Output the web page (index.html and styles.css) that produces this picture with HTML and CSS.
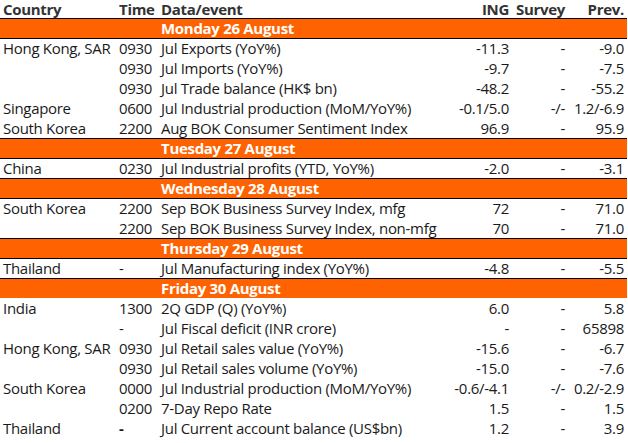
FILE: index.html
```html
<!DOCTYPE html>
<html lang="en">
<head>
<meta charset="utf-8">
<title>Asia calendar</title>
<link rel="stylesheet" href="styles.css">
</head>
<body>
<div class="cal">
  <div class="row head">
    <div class="c1">Country</div><div>Time</div><div>Data/event</div><div class="num">ING</div><div class="num">Survey</div><div class="num">Prev.</div>
  </div>

  <div class="row band"><div></div><div></div><div>Monday 26 August</div></div>
  <div class="group">
    <div class="row"><div class="c1">Hong Kong, SAR</div><div>0930</div><div>Jul Exports (YoY%)</div><div class="num">-11.3</div><div class="num">-</div><div class="num">-9.0</div></div>
    <div class="row"><div class="c1"></div><div>0930</div><div>Jul Imports (YoY%)</div><div class="num">-9.7</div><div class="num">-</div><div class="num">-7.5</div></div>
    <div class="row"><div class="c1"></div><div>0930</div><div>Jul Trade balance (HK$ bn)</div><div class="num">-48.2</div><div class="num">-</div><div class="num">-55.2</div></div>
    <div class="row"><div class="c1">Singapore</div><div>0600</div><div>Jul Industrial production (MoM/YoY%)</div><div class="num">-0.1/5.0</div><div class="num">-/-</div><div class="num">1.2/-6.9</div></div>
    <div class="row"><div class="c1">South Korea</div><div>2200</div><div>Aug BOK Consumer Sentiment Index</div><div class="num">96.9</div><div class="num">-</div><div class="num">95.9</div></div>
  </div>

  <div class="row band"><div></div><div></div><div>Tuesday 27 August</div></div>
  <div class="group">
    <div class="row"><div class="c1">China</div><div>0230</div><div>Jul Industrial profits (YTD, YoY%)</div><div class="num">-2.0</div><div class="num">-</div><div class="num">-3.1</div></div>
  </div>

  <div class="row band"><div></div><div></div><div>Wednesday 28 August</div></div>
  <div class="group">
    <div class="row"><div class="c1">South Korea</div><div>2200</div><div>Sep BOK Business Survey Index, mfg</div><div class="num">72</div><div class="num">-</div><div class="num">71.0</div></div>
    <div class="row"><div class="c1"></div><div>2200</div><div>Sep BOK Business Survey Index, non-mfg</div><div class="num">70</div><div class="num">-</div><div class="num">71.0</div></div>
  </div>

  <div class="row band"><div></div><div></div><div>Thursday 29 August</div></div>
  <div class="group">
    <div class="row"><div class="c1">Thailand</div><div>-</div><div>Jul Manufacturing index (YoY%)</div><div class="num">-4.8</div><div class="num">-</div><div class="num">-5.5</div></div>
  </div>

  <div class="row band"><div></div><div></div><div>Friday 30 August</div></div>
  <div class="group open">
    <div class="row"><div class="c1">India</div><div>1300</div><div>2Q GDP (Q) (YoY%)</div><div class="num">6.0</div><div class="num">-</div><div class="num">5.8</div></div>
    <div class="row"><div class="c1"></div><div>-</div><div>Jul Fiscal deficit (INR crore)</div><div class="num">-</div><div class="num">-</div><div class="num">65898</div></div>
    <div class="row"><div class="c1">Hong Kong, SAR</div><div>0930</div><div>Jul Retail sales value (YoY%)</div><div class="num">-15.6</div><div class="num">-</div><div class="num">-6.7</div></div>
    <div class="row"><div class="c1"></div><div>0930</div><div>Jul Retail sales volume (YoY%)</div><div class="num">-15.0</div><div class="num">-</div><div class="num">-7.6</div></div>
    <div class="row"><div class="c1">South Korea</div><div>0000</div><div>Jul Industrial production (MoM/YoY%)</div><div class="num">-0.6/-4.1</div><div class="num">-/-</div><div class="num">0.2/-2.9</div></div>
    <div class="row"><div class="c1"></div><div>0200</div><div>7-Day Repo Rate</div><div class="num">1.5</div><div class="num">-</div><div class="num">1.5</div></div>
    <div class="row"><div class="c1">Thailand</div><div class="strong">-</div><div>Jul Current account balance (US$bn)</div><div class="num">1.2</div><div class="num">-</div><div class="num">3.9</div></div>
  </div>
</div>
</body>
</html>
```

FILE: styles.css
```css
html, body {
  margin: 0;
  padding: 0;
  background: #ffffff;
}

body {
  font-family: "Open Sans", "Liberation Sans", Arial, sans-serif;
  font-size: 15px;
  letter-spacing: -0.3px;
  color: #1a1a1a;
}

.cal {
  width: 627px;
}

.row {
  display: grid;
  grid-template-columns: 119px 42px 279px 69px 56px 59px 3px;
  height: 20px;
  line-height: 20px;
  white-space: nowrap;
}

.row > div {
  min-width: 0;
}

.c1 {
  padding-left: 3px;
}

.num {
  text-align: right;
}

.strong {
  font-weight: bold;
}

.head {
  height: 18px;
  line-height: 18px;
  font-weight: bold;
  color: #333333;
}

.band {
  box-sizing: border-box;
  border-top: 1px solid #000000;
  background: #ff6200;
  color: #ffffff;
  font-weight: bold;
  line-height: 19px;
}

.group > .row:first-child {
  box-sizing: border-box;
  border-top: 1px solid #000000;
  line-height: 19px;
}

.group.open > .row:first-child {
  border-top: none;
  line-height: 20px;
}
```
